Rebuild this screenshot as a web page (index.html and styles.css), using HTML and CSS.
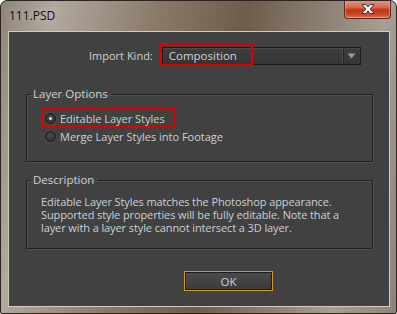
FILE: index.html
```html
<!DOCTYPE html>
<html>
<head>
<meta charset="utf-8">
<link rel="stylesheet" href="styles.css">
</head>
<body>
<div class="window">
  <div class="titlebar">
    <span class="title">111.PSD</span>
    <div class="close"><svg width="18" height="12" viewBox="0 0 18 12"><path d="M3 1.5 L7 1.5 L9 4 L11 1.5 L15 1.5 L11.2 6 L15 10.5 L11 10.5 L9 8 L7 10.5 L3 10.5 L6.8 6 Z" fill="#f2f2f2" stroke="#3a3a50" stroke-width="1"/></svg></div>
  </div>
  <div class="client">
    <div class="import-row">
      <span class="label">Import Kind:</span>
      <div class="select-wrap">
        <div class="select">
          <span class="select-text">Composition</span>
          <span class="select-arrow"><svg width="9" height="6" viewBox="0 0 9 6"><path d="M0.5 0.5 L8.5 0.5 L4.5 5.5 Z" fill="#9a9a9a"/></svg></span>
        </div>
        <div class="highlight-select"></div>
      </div>
    </div>
    <fieldset class="group options">
      <legend>Layer Options</legend>
      <div class="radio-list">
        <div class="radio-row highlighted"><span class="radio checked"></span><span>Editable Layer Styles</span></div>
        <div class="radio-row"><span class="radio"></span><span>Merge Layer Styles into Footage</span></div>
      </div>
    </fieldset>
    <fieldset class="group desc">
      <legend>Description</legend>
      <p class="desc-text">Editable Layer Styles matches the Photoshop appearance. Supported style properties will be fully editable. Note that a layer with a layer style cannot intersect a 3D layer.</p>
    </fieldset>
    <div class="button-row">
      <div class="ok">OK</div>
    </div>
  </div>
</div>
</body>
</html>
```

FILE: styles.css
```css
html, body {
  margin: 0;
  padding: 0;
  background: #ffffff;
}
body {
  font-family: "Open Sans", "Noto Sans", "DejaVu Sans", sans-serif;
}
.window {
  width: 397px;
  height: 314px;
  box-sizing: border-box;
  border: 1px solid #2a2520;
  border-radius: 7px 7px 2px 2px;
  background: linear-gradient(100deg, #8f8479 0%, #b2a89e 12%, #8a7a6a 35%, #6e5c4b 55%, #8c7f72 72%, #a79e94 86%, #8e8378 100%);
  display: flex;
  flex-direction: column;
  overflow: hidden;
}
.titlebar {
  height: 29px;
  display: flex;
  justify-content: space-between;
  align-items: flex-start;
  padding-left: 8px;
  padding-right: 5px;
  flex: none;
}
.title {
  font-family: "Open Sans", sans-serif;
  font-size: 12px;
  color: #0c1018;
  line-height: 12px;
  margin-top: 9px;
  text-shadow: 0 0 8px rgba(255,255,255,0.6);
}
.close {
  width: 47px;
  height: 19px;
  margin-top: -1px;
  box-sizing: border-box;
  border: 1px solid #5a2a20;
  border-top: none;
  border-radius: 0 0 4px 4px;
  background: linear-gradient(#e49a88 0%, #d86a50 40%, #c23616 55%, #c9452a 80%, #d77a5c 100%);
  box-shadow: inset 0 0 0 1px rgba(255,220,200,0.35);
  display: flex;
  align-items: center;
  justify-content: center;
}
.close svg { display: block; }
.client {
  margin: 1px 6px 6px 7px;
  flex: 1;
  box-sizing: border-box;
  border: 1px solid #d4cbc0;
  background: #414141;
  display: flex;
  flex-direction: column;
  padding: 14px 0 0 17px;
  color: #cbd0d6;
  font-size: 11px;
}
.import-row {
  display: flex;
  align-items: center;
  height: 19px;
  padding-left: 63px;
}
.label {
  font-size: 11px;
  margin-right: 9px;
}
.select-wrap {
  position: relative;
}
.select {
  width: 199px;
  height: 18px;
  box-sizing: border-box;
  border: 1px solid #1c1c1c;
  background: linear-gradient(#3e3e3e, #353535);
  box-shadow: inset 0 1px 0 #4a4a4a;
  display: flex;
  align-items: center;
  justify-content: space-between;
}
.select-text {
  padding-left: 6px;
  font-size: 11.5px;
  color: #d2d2d2;
}
.select-arrow {
  width: 16px;
  height: 14px;
  border-left: 1px solid #222;
  box-shadow: -1px 0 0 #4c4c4c;
  display: flex;
  align-items: center;
  justify-content: center;
}
.select-arrow svg { display: block; }
.highlight-select {
  position: absolute;
  left: -3px;
  top: -4px;
  width: 94px;
  height: 23px;
  box-sizing: border-box;
  border: 2px solid #e10000;
}
.group {
  margin: 0;
  width: 347px;
  box-sizing: border-box;
  border: 1px solid #222;
  box-shadow: 1px 1px 0 #505050, inset 1px 1px 0 #505050;
  padding: 0;
  min-width: 0;
}
.group legend {
  padding: 0 4px 0 2px;
  margin-left: 4px;
  font-size: 11.5px;
  line-height: 14px;
  color: #cbd0d6;
}
.options {
  margin-top: 22px;
  height: 75px;
}
.radio-list {
  display: flex;
  flex-direction: column;
  align-items: flex-start;
  padding: 7px 0 0 14px;
}
.radio-row {
  display: flex;
  align-items: center;
  height: 17px;
  gap: 4px;
  font-size: 11px;
  box-sizing: border-box;
  padding-left: 4px;
}
.radio-row.highlighted {
  border: 2px solid #e10000;
  padding: 0 9px 0 2px;
  height: 20px;
}
.radio {
  width: 11px;
  height: 11px;
  box-sizing: border-box;
  border-radius: 50%;
  border: 1px solid #1a1a1a;
  background: radial-gradient(circle at 50% 40%, #4a4a4a, #2c2c2c);
  box-shadow: 0 0 0 1px #4c4c4c;
  display: flex;
  align-items: center;
  justify-content: center;
}
.radio.checked::after {
  content: "";
  width: 3px;
  height: 3px;
  border-radius: 50%;
  background: #d8d8d8;
}
.desc {
  margin-top: 11px;
  height: 76px;
}
.desc-text {
  margin: 8px 8px 0 14px;
  font-size: 11px;
  line-height: 13px;
  letter-spacing: -0.1px;
  color: #cbd0d6;
}
.button-row {
  display: flex;
  padding-left: 158px;
  margin-top: 22px;
}
.ok {
  width: 89px;
  height: 20px;
  box-sizing: border-box;
  border: 1px solid #d09a10;
  background: linear-gradient(#4c4c4c, #3a3a3a);
  box-shadow: inset 0 0 0 1px #1c1c1c;
  display: flex;
  align-items: center;
  justify-content: center;
  font-size: 11.5px;
  color: #cbd0d6;
}
```
